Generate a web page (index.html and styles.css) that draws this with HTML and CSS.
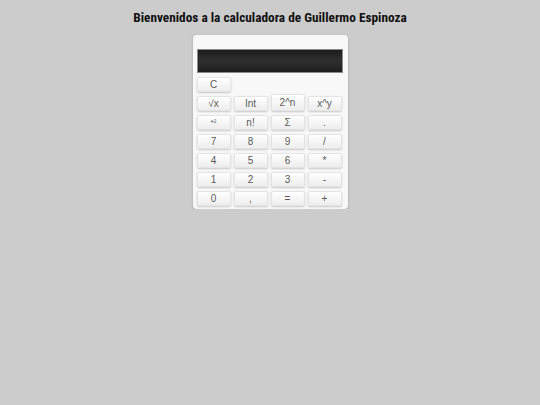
FILE: index.html
```html
<!DOCTYPE html>
<html lang="es">
<head>
<meta charset="utf-8">
<title>Calculadora</title>
<link rel="stylesheet" href="styles.css">
</head>
<body>
<h1 class="title">Bienvenidos a la calculadora de Guillermo Espinoza</h1>
<div class="calc">
  <div class="display"></div>
  <div class="keys">
    <button class="key">C</button>
    <span class="spacer"></span>
    <button class="key">√x</button>
    <button class="key">Int</button>
    <button class="key raised">2^n</button>
    <button class="key">x^y</button>
    <button class="key tiny">*²</button>
    <button class="key">n!</button>
    <button class="key">Σ</button>
    <button class="key">.</button>
    <button class="key">7</button>
    <button class="key">8</button>
    <button class="key">9</button>
    <button class="key">/</button>
    <button class="key">4</button>
    <button class="key">5</button>
    <button class="key">6</button>
    <button class="key">*</button>
    <button class="key">1</button>
    <button class="key">2</button>
    <button class="key">3</button>
    <button class="key">-</button>
    <button class="key">0</button>
    <button class="key">,</button>
    <button class="key">=</button>
    <button class="key">+</button>
  </div>
</div>
</body>
</html>
```
FILE: styles.css
```css
html, body {
  margin: 0;
  padding: 0;
  background: #cccccc;
}
body {
  font-family: "Liberation Sans", Arial, sans-serif;
}
.title {
  margin: 0;
  padding-top: 8px;
  height: 27px;
  box-sizing: border-box;
  text-align: center;
  font-family: "Roboto Condensed", "Liberation Sans Narrow", Roboto, sans-serif;
  font-stretch: condensed;
  font-weight: 700;
  font-size: 13.3px;
  line-height: 19px;
  color: #111;
}
.calc {
  width: 146px;
  margin: 8px auto 0;
  padding: 14px 5px 3px 4px;
  background: #f8f8f8;
  border-radius: 4px;
  box-shadow: 0 1px 3px rgba(0,0,0,0.18);
}
.display {
  height: 22px;
  border: 1px solid #8a8a8a;
  background: linear-gradient(#1c1c1c, #2f2f2f 50%, #1e1e1e);
  width: 144px;
}
.keys {
  margin-top: 4px;
  display: grid;
  grid-template-columns: repeat(4, 34px);
  grid-auto-rows: 15px;
  column-gap: 3px;
  row-gap: 4px;
}
.spacer {
  grid-column: span 3;
}
.key {
  margin: 0;
  padding: 0;
  height: 15px;
  border: 1px solid #e4e4e4;
  border-radius: 2px;
  background: linear-gradient(#ffffff, #ededed);
  box-shadow: 0 1px 2px rgba(0,0,0,0.2);
  color: #5a5a5a;
  font-family: "Liberation Sans", Arial, sans-serif;
  font-size: 10px;
  line-height: 13px;
}
.key.tiny {
  font-size: 8px;
}
.key.raised {
  height: 17px;
  margin-top: -2px;
}
```
